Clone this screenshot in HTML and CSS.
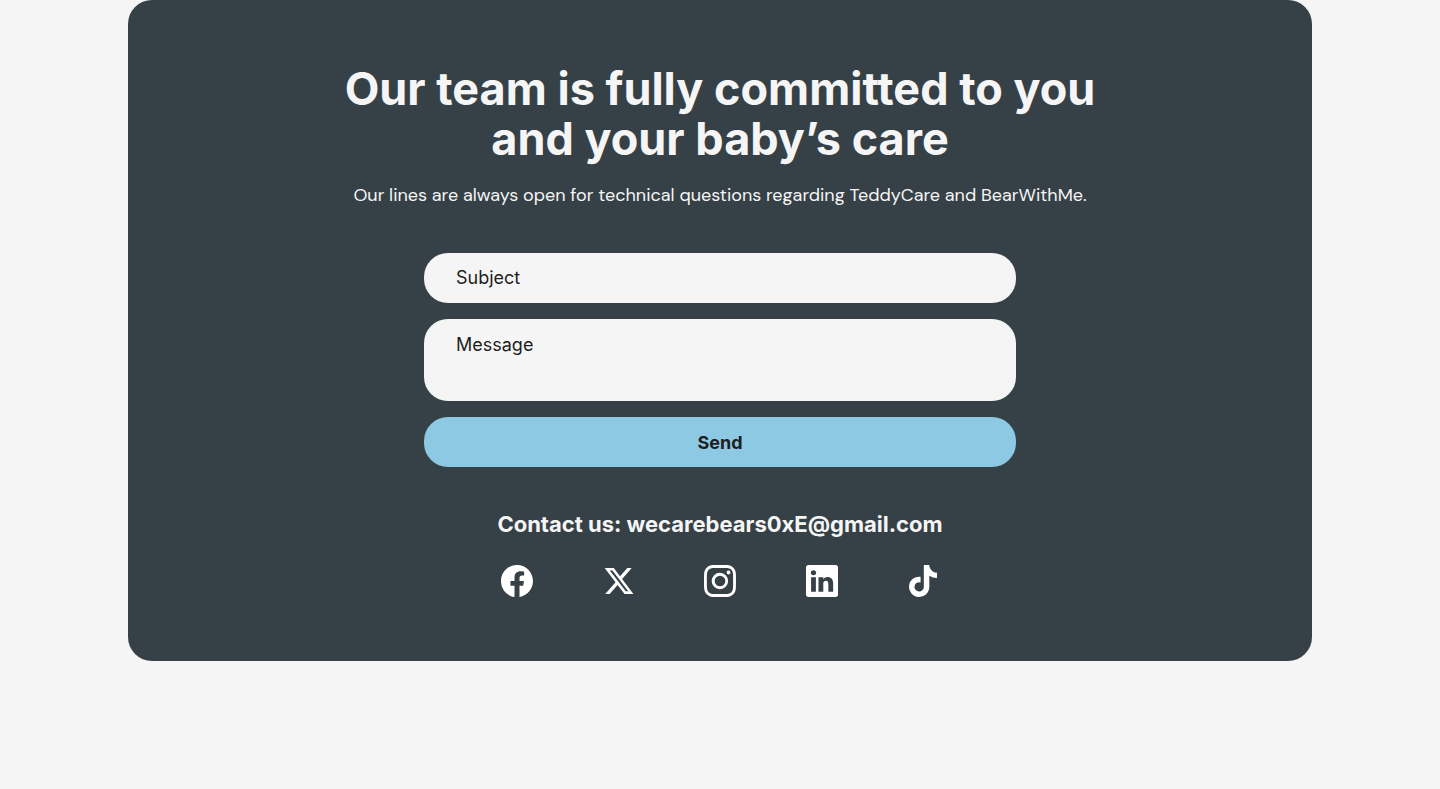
FILE: index.html
```html
<!DOCTYPE html>
<html lang="en">
<head>
<meta charset="utf-8">
<meta name="viewport" content="width=device-width, initial-scale=1">
<title>Contact us</title>
<link rel="stylesheet" href="styles.css">
</head>
<body>
<main class="page">
  <section class="contact">
    <h2 class="contact-title">Our team is fully committed to you and your baby’s care</h2>
    <p class="contact-lead">Our lines are always open for technical questions regarding TeddyCare and BearWithMe.</p>
    <form class="contact-form">
      <input class="field" type="text" name="subject" placeholder="Subject" aria-label="Subject">
      <textarea class="field field-message" name="message" rows="2" placeholder="Message" aria-label="Message"></textarea>
      <button class="send" type="submit">Send</button>
    </form>
    <div class="reach">
      <h3 class="reach-title">Contact us: wecarebears0xE@gmail.com</h3>
      <nav class="social" aria-label="Social media">
        <a href="#" aria-label="Facebook"><svg class="icon" viewBox="0 0 16 16"><path d="M16 8.049c0-4.446-3.582-8.05-8-8.05C3.58 0-.002 3.603-.002 8.05c0 4.017 2.926 7.347 6.75 7.951v-5.625h-2.03V8.05H6.75V6.275c0-2.017 1.195-3.131 3.022-3.131.876 0 1.791.157 1.791.157v1.98h-1.009c-.993 0-1.303.621-1.303 1.258v1.51h2.218l-.354 2.326H9.25V16c3.824-.604 6.75-3.934 6.75-7.951"/></svg></a>
        <a href="#" aria-label="X"><svg class="icon" viewBox="0 0 24 24"><path d="M18.244 2.25h3.308l-7.227 8.26 8.502 11.24H16.17l-5.214-6.817L4.99 21.75H1.68l7.73-8.835L1.254 2.25H8.08l4.713 6.231zm-1.161 17.52h1.833L7.084 4.126H5.117z"/></svg></a>
        <a href="#" aria-label="Instagram"><svg class="icon" viewBox="0 0 16 16"><path d="M8 0C5.829 0 5.556.01 4.703.048 3.85.088 3.269.222 2.76.42a3.9 3.9 0 0 0-1.417.923A3.9 3.9 0 0 0 .42 2.76C.222 3.268.087 3.85.048 4.7.01 5.555 0 5.827 0 8.001c0 2.172.01 2.444.048 3.297.04.852.174 1.433.372 1.942.205.526.478.972.923 1.417.444.445.89.719 1.416.923.51.198 1.09.333 1.942.372C5.555 15.99 5.827 16 8 16s2.444-.01 3.298-.048c.851-.04 1.434-.174 1.943-.372a3.9 3.9 0 0 0 1.416-.923c.445-.445.718-.891.923-1.417.197-.509.332-1.09.372-1.942C15.99 10.445 16 10.173 16 8s-.01-2.445-.048-3.299c-.04-.851-.175-1.433-.372-1.941a3.9 3.9 0 0 0-.923-1.417A3.9 3.9 0 0 0 13.24.42c-.51-.198-1.092-.333-1.943-.372C10.443.01 10.172 0 7.998 0zm-.717 1.442h.718c2.136 0 2.389.007 3.232.046.78.035 1.204.166 1.486.275.373.145.64.319.92.599s.453.546.598.92c.11.281.24.705.275 1.485.039.843.047 1.096.047 3.231s-.008 2.389-.047 3.232c-.035.78-.166 1.203-.275 1.485a2.5 2.5 0 0 1-.599.919c-.28.28-.546.453-.92.598-.28.11-.704.24-1.485.276-.843.038-1.096.047-3.232.047s-2.39-.009-3.233-.047c-.78-.036-1.203-.166-1.485-.276a2.5 2.5 0 0 1-.92-.598 2.5 2.5 0 0 1-.6-.92c-.109-.281-.24-.705-.275-1.485-.038-.843-.046-1.096-.046-3.233s.008-2.388.046-3.231c.036-.78.166-1.204.276-1.486.145-.373.319-.64.599-.92s.546-.453.92-.598c.282-.11.705-.24 1.485-.276.738-.034 1.024-.044 2.515-.045zm4.988 1.328a.96.96 0 1 0 0 1.92.96.96 0 0 0 0-1.92m-4.27 1.122a4.109 4.109 0 1 0 0 8.217 4.109 4.109 0 0 0 0-8.217m0 1.441a2.667 2.667 0 1 1 0 5.334 2.667 2.667 0 0 1 0-5.334"/></svg></a>
        <a href="#" aria-label="LinkedIn"><svg class="icon" viewBox="0 0 16 16"><path d="M0 1.146C0 .513.526 0 1.175 0h13.65C15.474 0 16 .513 16 1.146v13.708c0 .633-.526 1.146-1.175 1.146H1.175C.526 16 0 15.487 0 14.854zm4.943 12.248V6.169H2.542v7.225zm-1.2-8.212c.837 0 1.358-.554 1.358-1.248-.015-.709-.52-1.248-1.342-1.248S2.4 3.226 2.4 3.934c0 .694.521 1.248 1.327 1.248zm4.908 8.212V9.359c0-.216.016-.432.08-.586.173-.431.568-.878 1.232-.878.869 0 1.216.662 1.216 1.634v3.865h2.401V9.25c0-2.22-1.184-3.252-2.764-3.252-1.274 0-1.845.7-2.165 1.193v.025h-.016l.016-.025V6.169h-2.4c.03.678 0 7.225 0 7.225z"/></svg></a>
        <a href="#" aria-label="TikTok"><svg class="icon" viewBox="0 0 448 512"><path d="M448 209.91a210.06 210.06 0 0 1-122.77-39.25v178.72A162.55 162.55 0 1 1 185 188.31v89.89a74.62 74.62 0 1 0 52.23 71.18V0h88a121.18 121.18 0 0 0 1.86 22.17A122.18 122.18 0 0 0 381 102.39a121.43 121.43 0 0 0 67 20.14z"/></svg></a>
      </nav>
    </div>
  </section>
</main>
</body>
</html>
```
FILE: styles.css
```css
* { box-sizing: border-box; }

body {
  margin: 0;
  background: #f5f5f5;
  color: #f5f5f5;
  font-family: Inter, "Liberation Sans", sans-serif;
}

.page { padding: 0 128px 128px; }

.contact {
  display: flex;
  flex-direction: column;
  align-items: center;
  padding: 64px;
  border-radius: 24px;
  background: #364147;
  text-align: center;
}

.contact-title {
  max-width: 800px;
  margin: 0;
  font-size: 45px;
  font-weight: 700;
  line-height: 50px;
}

.contact-lead {
  margin: 17px 0 0;
  font-family: "DM Sans", "Open Sans", sans-serif;
  font-size: 18px;
  line-height: 28px;
}

.contact-form {
  display: flex;
  flex-direction: column;
  gap: 16px;
  width: 100%;
  max-width: 592px;
  margin-top: 44px;
}

.field,
.send {
  display: block;
  width: 100%;
  padding: 12px 32px;
  border: 0;
  border-radius: 24px;
  font-family: inherit;
  font-size: 18px;
  line-height: 26px;
  color: #1e1e1e;
}

.field { background: #f5f5f5; }
.field::placeholder { color: #1e1e1e; opacity: 1; }
.field-message { padding: 13px 32px 17px; resize: none; }

.send {
  padding: 13px 32px 11px;
  background: #8ec9e3;
  font-weight: 700;
  cursor: pointer;
}

.reach { margin-top: 43px; }

.reach-title {
  margin: 0;
  font-size: 22px;
  font-weight: 700;
  line-height: 28px;
}

.social {
  display: flex;
  justify-content: space-between;
  max-width: 438px;
  margin: 27px auto 0;
}

.social a { display: block; color: #fff; }

.icon {
  display: block;
  width: 32px;
  height: 32px;
  fill: currentColor;
}
```
